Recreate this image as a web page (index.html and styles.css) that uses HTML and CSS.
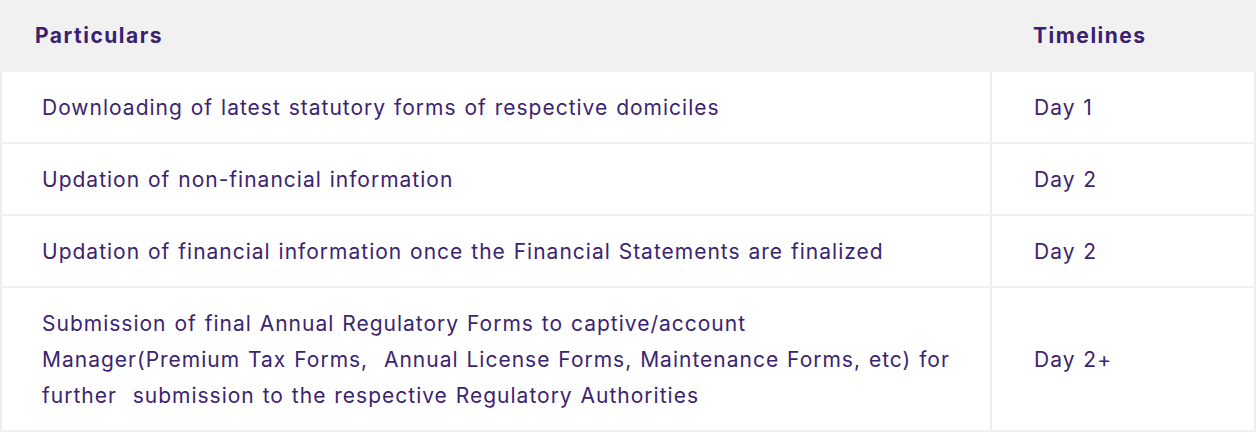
FILE: index.html
```html
<!DOCTYPE html>
<html>
<head>
<meta charset="utf-8">
<link rel="stylesheet" href="styles.css">
</head>
<body>
<table class="tbl">
  <thead>
    <tr>
      <th class="h-part">Particulars</th>
      <th class="h-time">Timelines</th>
    </tr>
  </thead>
  <tbody>
    <tr>
      <td class="c-part">Downloading of latest statutory forms of respective domiciles</td>
      <td class="c-time">Day 1</td>
    </tr>
    <tr>
      <td class="c-part">Updation of non-financial information</td>
      <td class="c-time">Day 2</td>
    </tr>
    <tr>
      <td class="c-part">Updation of financial information once the Financial Statements are finalized</td>
      <td class="c-time">Day 2</td>
    </tr>
    <tr>
      <td class="c-part">Submission of final Annual Regulatory Forms to captive/account<br>Manager(Premium Tax Forms,&nbsp; Annual License Forms, Maintenance Forms, etc) for<br>further&nbsp; submission to the respective Regulatory Authorities</td>
      <td class="c-time">Day 2+</td>
    </tr>
  </tbody>
</table>
</body>
</html>
```
FILE: styles.css
```css
html, body {
  margin: 0;
  padding: 0;
  background: #ffffff;
}
.tbl {
  width: 1256px;
  table-layout: fixed;
  border-collapse: separate;
  border-spacing: 0;
  font-family: "Inter", "Noto Sans", sans-serif;
  color: #3b2470;
  font-size: 21px;
  letter-spacing: 1px;
  word-spacing: 1px;
  line-height: 36px;
}
.tbl th {
  background: #f1f1f1;
  height: 72px;
  padding: 0;
  text-align: left;
  font-weight: 700;
  color: #3a2170;
  letter-spacing: 1.5px;
  word-spacing: 0;
  box-sizing: border-box;
}
.h-part {
  width: 992px;
  padding-left: 35px !important;
}
.h-time {
  padding-left: 41px !important;
}
.tbl td {
  padding: 18px 40px 16px;
  border-bottom: 2px solid #efefef;
  vertical-align: middle;
}
.c-part {
  white-space: nowrap;
  border-left: 2px solid #efefef;
  border-right: 2px solid #efefef;
}
.c-time {
  padding-left: 42px !important;
  border-right: 2px solid #efefef;
}
```
